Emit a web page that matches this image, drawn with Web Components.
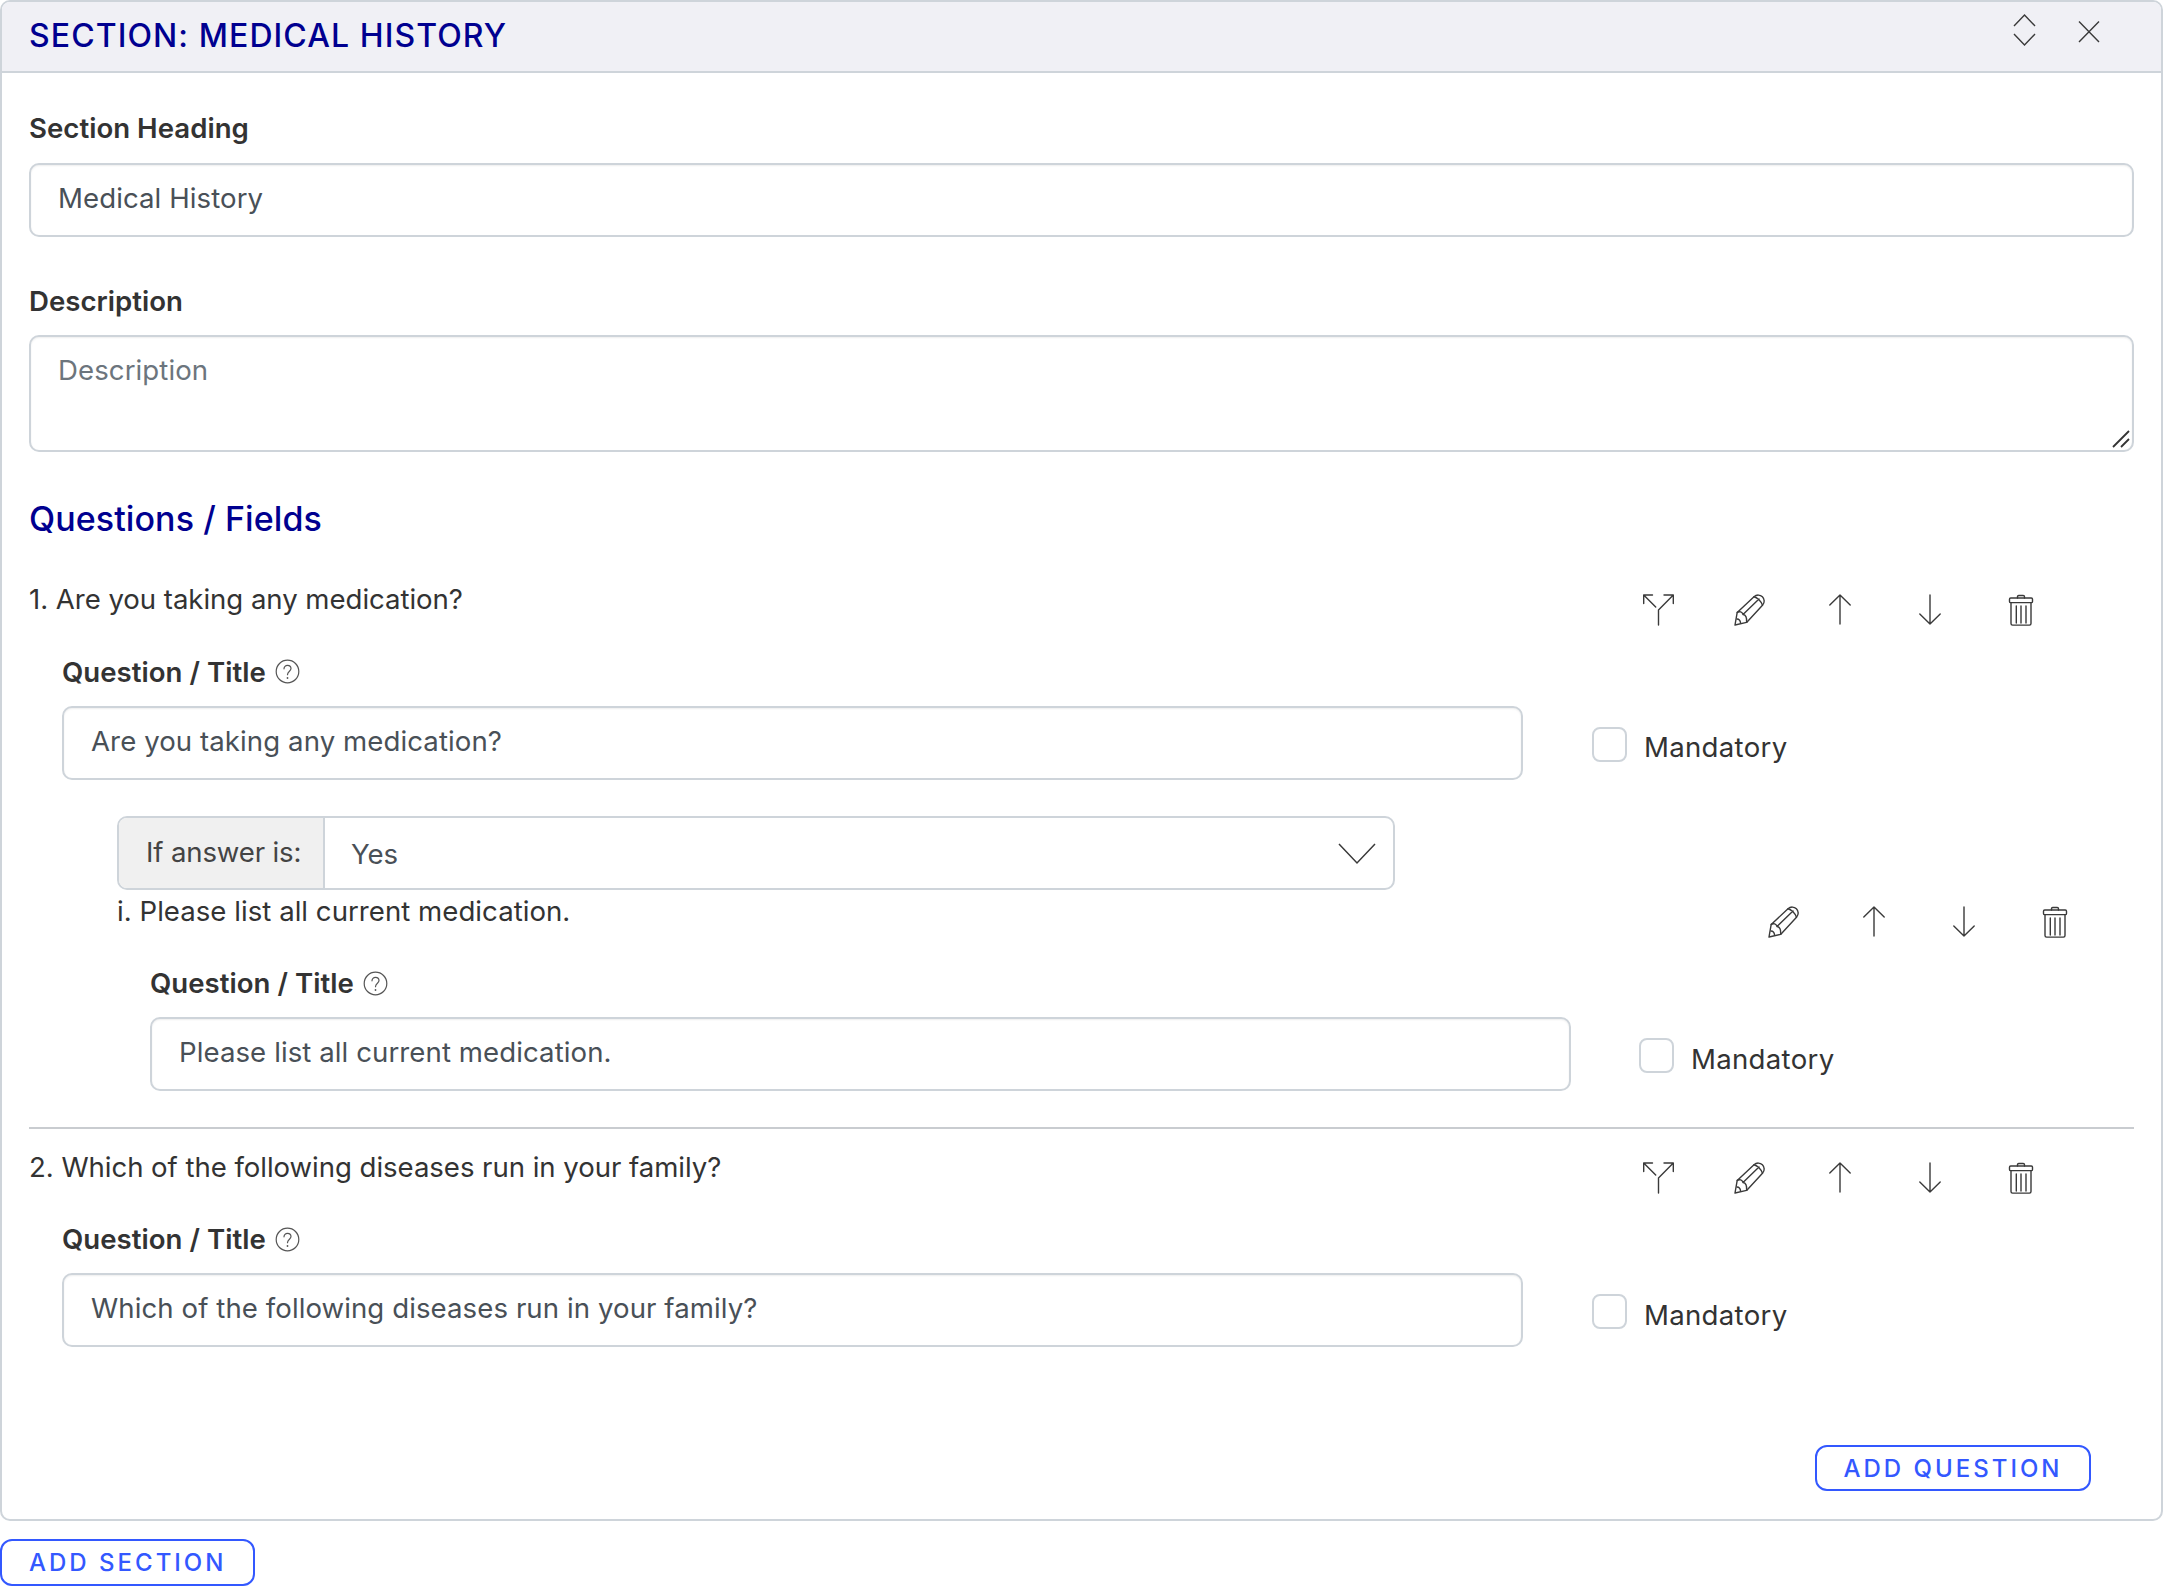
<!DOCTYPE html>
<html lang="en"><head><meta charset="utf-8"><title>Section</title>
<style>
html,body{margin:0;padding:0;background:#fff}
body{font-family:Inter,"Liberation Sans",sans-serif;font-size:27.6px;color:#333;letter-spacing:-.05px}
</style></head><body>
<app-page>
  <section-card title-text="SECTION: MEDICAL HISTORY">
    <form-field label="Section Heading" value="Medical History" style="--gap:15px"></form-field>
    <form-field label="Description" placeholder="Description" multiline style="margin-top:44px"></form-field>
    <section-heading>Questions / Fields</section-heading>
    <question-block text="1. Are you taking any medication?" value="Are you taking any medication?" branch>
      <cond-select value="Yes"></cond-select>
      <question-block sub text="i. Please list all current medication." value="Please list all current medication."></question-block>
    </question-block>
    <h-rule></h-rule>
    <question-block text="2. Which of the following diseases run in your family?" value="Which of the following diseases run in your family?" branch></question-block>
    <button-row><outline-btn>ADD QUESTION</outline-btn></button-row>
  </section-card>
  <outline-btn style="margin-top:18px">ADD SECTION</outline-btn>
</app-page>
<script>
const S='fill="none" stroke="#3a3a3a" stroke-width="1.4" stroke-linecap="round" stroke-linejoin="round"';
const ICONS={
 fork:`<svg width="32" height="32" viewBox="0 0 32 32" ${S}><path d="M9.5 1H.7v8.5M.7 1l12 12M21 1h9.3v8.5M30.3 1 15.5 16v15"/></svg>`,
 pencil:`<svg width="32" height="32" viewBox="-1 0 32 32" ${S}><path d="M1 31l2.2-12.6L20 2.8c2.6-2.4 6.2-2.2 8.4 0s2.5 5.9.1 8.4L12.6 28.4z"/><path d="M3.2 18.4c2.300-1.500 5.200-.4 5.800 2.100 2.500.3 4 2.800 3.600 7.900M9 20.500 25 5M3 25c2 .1 3.200 1.400 3.500 3.700M20 2.800c3 .5 7.400 4.800 8.500 8.400"/></svg>`,
 up:`<svg width="32" height="32" viewBox="0 0 32 32" ${S}><path d="M16 30V1M5.800 11 16 1l10.200 10"/></svg>`,
 down:`<svg width="32" height="32" viewBox="0 0 32 32" ${S}><path d="M16 1v29M5.800 20 16 30l10.200-10"/></svg>`,
 trash:`<svg width="32" height="32" viewBox="0 0 32 32" ${S}><rect x="4.500" y="4" width="23" height="4.600" rx="1.200"/><path d="M12.500 4V2.800c0-.9.5-1.300 1.300-1.300h4.400c.8 0 1.300.4 1.300 1.300V4M6 8.600v21c0 1 .6 1.500 1.500 1.500h17c.9 0 1.500-.5 1.500-1.500v-21M11.300 12v17M16 12v17M21 12v17"/></svg>`
};
function def(name,css,html){
  customElements.define(name,class extends HTMLElement{
    connectedCallback(){
      if(this.shadowRoot)return;
      const r=this.attachShadow({mode:'open'});
      r.innerHTML=`<style>${css}</style>${typeof html==='function'?html(this):html}`;
    }
  });
}
const esc=s=>(s||'').replace(/&/g,'&amp;').replace(/</g,'&lt;');
def('app-page',':host{display:block;height:1595px;overflow:hidden}','<slot></slot>');
def('section-card',`
 :host{display:block;border:2px solid #ced4da;border-radius:10px;box-sizing:border-box;height:1521px;background:#fff;overflow:hidden}
 header{height:71px;box-sizing:border-box;background:#f0f0f5;border-bottom:2px solid #ced4da;display:flex;align-items:flex-start;padding-left:27px;position:relative}
 h2{margin:0;font-size:32px;line-height:68px;font-weight:500;color:#000090;letter-spacing:1.08px;flex:1}
 .ic{display:flex;margin-right:61px;margin-top:11px;gap:42px}
 .ic svg:first-child{margin-left:1px}
 .body{padding:35px 27px 0}
`,el=>`<header><h2>${esc(el.getAttribute('title-text'))}</h2><div class="ic">
 <svg width="24" height="36" viewBox="0 0 24 36" fill="none" stroke="#3a3a3a" stroke-width="1.400"><path d="M2 13 12.500 2 23 13M2 21l10.500 11L23 21"/></svg>
 <svg width="22" height="24" viewBox="0 0 22 24" fill="none" stroke="#3a3a3a" stroke-width="1.400" style="margin-top:7px"><path d="M1 1.500l20 20.500M21 1.500 1 22"/></svg>
</div></header><div class="body"><slot></slot></div>`);
def('field-label',`:host{display:flex;align-items:center;gap:9px;height:40px;font-weight:600;color:#333;font-size:27.6px;letter-spacing:.02px}`,`<slot></slot>`);
def('text-box',`
 :host{display:block;box-sizing:border-box;height:74px;border:2px solid #ced4da;border-radius:10px;background:#fff;box-shadow:inset 0 1px 2px rgba(0,0,0,.07);padding:0 27px;line-height:67px;color:#495057;position:relative;font-size:27.6px;letter-spacing:.08px}
 :host([multiline]){height:117px;line-height:1;padding-top:20px}
 :host([muted]){color:#6c757d}
 svg{position:absolute;right:1px;bottom:1px}
`,el=>`<slot></slot>${el.hasAttribute('multiline')?'<svg width="20" height="20" viewBox="0 0 20 20" stroke="#333" stroke-width="1.800" fill="none"><path d="M2 18 18 2M10 18l8-8"/></svg>':''}`);
def('form-field',':host{display:block} text-box{margin-top:var(--gap,14px)}',el=>{
 const ml=el.hasAttribute('multiline');const ph=el.getAttribute('placeholder');
 return `<field-label>${esc(el.getAttribute('label'))}</field-label><text-box ${ml?'multiline':''} ${ph?'muted':''}>${esc(el.getAttribute('value')||ph)}</text-box>`;});
def('section-heading',':host{display:block;margin:47px 0 40px;height:40px;line-height:40px;font-size:34px;font-weight:500;color:#000090;letter-spacing:.08px}','<slot></slot>');
def('help-icon',':host{display:inline-flex}',`<svg width="25" height="25" viewBox="0 0 25 25" fill="none" stroke="#555" stroke-width="1.200"><circle cx="12.500" cy="12.500" r="11.300"/><path d="M9 9.800c0-2.100 1.500-3.400 3.500-3.400s3.500 1.300 3.500 3.200c0 2.600-3.500 2.700-3.500 6.100" stroke-linecap="round"/><circle cx="12.500" cy="19" r=".9" fill="#555" stroke="none"/></svg>`);
def('action-icons',`:host{display:flex;gap:50.400px} span{width:40px;height:32px;display:flex;justify-content:center}`,el=>{
 const list=['pencil','up','down','trash'];if(el.hasAttribute('branch'))list.unshift('fork');
 return list.map(k=>`<span>${ICONS[k]}</span>`).join('');});
def('mandatory-check',`
 :host{display:flex;align-items:center;gap:17px;margin-top:3px;font-size:27.6px;color:#333;letter-spacing:.3px}
 i{display:block;width:35px;height:35px;box-sizing:border-box;border:2px solid #ced4da;border-radius:8px;background:#fff}
 span{position:relative;top:3px}
`,`<i></i><span>Mandatory</span>`);
def('question-block',`
 :host{display:block}
 .head{display:flex;justify-content:space-between;align-items:flex-start;height:46px}
 .t{line-height:40px;color:#333}
 :host([sub]) .t{letter-spacing:.03px}
 action-icons{margin-top:15px;margin-right:93.500px}
 :host([sub]) action-icons{margin-right:59.500px}
 .inner{padding-left:33px}
 field-label{margin-top:26.500px}
 .row{display:grid;grid-template-columns:1461px auto;column-gap:69px;margin-top:14px;align-items:center}
 :host([sub]) .row{grid-template-columns:1421px auto;column-gap:68px}
 ::slotted(cond-select){margin-top:36.500px;margin-left:88px}
 ::slotted(question-block){margin:.5px 0 0 88px}
`,el=>`<div class="head"><div class="t">${esc(el.getAttribute('text'))}</div><action-icons ${el.hasAttribute('branch')?'branch':''}></action-icons></div>
<div class="inner"><field-label>Question / Title <help-icon></help-icon></field-label>
<div class="row"><text-box>${esc(el.getAttribute('value'))}</text-box><mandatory-check></mandatory-check></div></div><slot></slot>`);
def('cond-select',`
 :host{display:flex;box-sizing:border-box;width:1278px;height:74px;border:2px solid #ced4da;border-radius:10px;overflow:hidden;background:#fff}
 b{font-weight:400;background:#f0f0f0;border-right:2px solid #ced4da;width:206px;box-sizing:border-box;padding-left:27px;line-height:68px;color:#444;letter-spacing:-.15px}
 span{flex:1;padding-left:26px;line-height:72px;color:#495057}
 svg{margin:25px 17px 0 0}
`,el=>`<b>If answer is:</b><span>${esc(el.getAttribute('value'))}</span><svg width="38" height="22" viewBox="0 0 38 22" fill="none" stroke="#3a3a3a" stroke-width="1.500"><path d="M1 1l18 19L37 1"/></svg>`);
def('h-rule',':host{display:block;height:1.500px;background:#c9ccd0;margin:36px 0 18px}','');
def('button-row',':host{display:flex;justify-content:flex-end;margin-top:97.500px;padding-right:43px}','<slot></slot>');
def('outline-btn',`
 :host{display:inline-flex;box-sizing:border-box;height:46.500px;border:2px solid #3358ff;border-radius:12px;padding:1px 26.500px 0 27px;align-items:center;color:#3358ff;font-size:24px;font-weight:500;letter-spacing:3px;background:#fff}
`,'<slot></slot>');
</script>
</body></html>
